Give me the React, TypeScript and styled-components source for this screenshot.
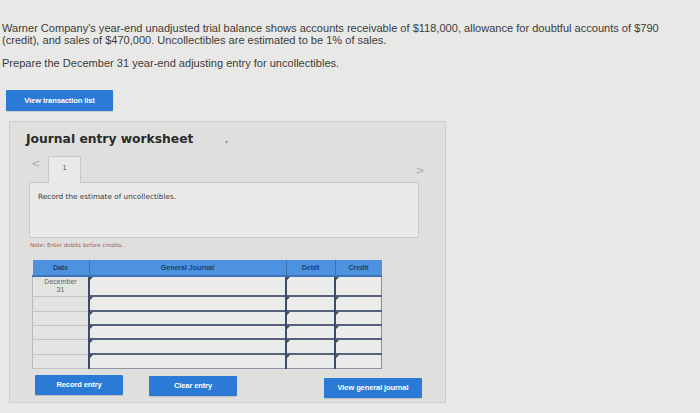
import React from "react";
import styled, { createGlobalStyle } from "styled-components";

const Global = createGlobalStyle`
  html, body { margin: 0; padding: 0; background: #e8e8e6; }
  body { width: 700px; height: 413px; overflow: hidden; }
`;

const Page = styled.div`
  padding: 23px 0 0 2px;
  font-family: "Liberation Sans", Arial, sans-serif;
  color: #333;
`;

const Intro = styled.p`
  margin: 0;
  font-size: 11.05px;
  line-height: 11.5px;
  color: #3c3c3c;
  width: 664px;
`;

const Prompt = styled.p`
  margin: 11px 0 0;
  font-size: 11.05px;
  line-height: 12px;
  color: #3c3c3c;
`;

const BlueButton = styled.button<{ $w: number }>`
  width: ${(p) => p.$w}px;
  height: 20px;
  border: none;
  border-radius: 1px;
  background: #2b7bd6;
  color: #fff;
  font-family: "Liberation Sans", Arial, sans-serif;
  font-weight: bold;
  font-size: 7.5px;
  letter-spacing: -0.1px;
  padding: 0;
  box-shadow: 0 1px 1px rgba(0,0,0,0.15);
`;

const TopButtonRow = styled.div`
  margin: 20px 0 0 4px;
`;

const Panel = styled.div`
  margin: 10px 0 0 7px;
  width: 437px;
  height: 282px;
  box-sizing: border-box;
  background: #dfdfdd;
  border: 1px solid #cdcdcb;
  padding: 10px 0 0 16px;
`;

const TitleRow = styled.div`
  display: flex;
  align-items: center;
  gap: 32px;
`;

const Title = styled.h2`
  margin: 0;
  font-family: "DejaVu Sans", Verdana, sans-serif;
  font-weight: bold;
  font-size: 12.3px;
  color: #2a2a2a;
`;

const Caret = styled.span`
  font-size: 6px;
  color: #999;
  margin-top: 4px;
`;

const TabRow = styled.div`
  display: flex;
  align-items: flex-end;
  height: 27px;
  margin-top: 9px;
  width: 394px;
`;

const Arrow = styled.span`
  color: #a8a8a8;
  font-family: "DejaVu Sans", sans-serif;
  font-size: 11px;
  align-self: center;
`;

const LeftArrow = styled(Arrow)`
  width: 22px;
  padding-left: 5px;
  box-sizing: border-box;
  margin-top: -10px;
`;

const RightArrow = styled(Arrow)`
  margin-left: auto;
  margin-top: 3px;
  margin-right: -5px;
`;

const Tab = styled.div`
  width: 33px;
  height: 27px;
  box-sizing: border-box;
  border: 1px solid #c8c8c6;
  border-bottom: none;
  background: #e9e9e7;
  font-family: "DejaVu Sans", sans-serif;
  font-size: 6.5px;
  color: #4a4a4a;
  display: flex;
  justify-content: center;
  padding-top: 7px;
  margin-bottom: -1px;
  position: relative;
  z-index: 1;
`;

const ContentBox = styled.div`
  margin-left: 3px;
  width: 390px;
  height: 56px;
  box-sizing: border-box;
  background: #e9e9e7;
  border: 1px solid #c8c8c6;
  padding: 9px 0 0 8px;
  font-family: "DejaVu Sans", Verdana, sans-serif;
  font-size: 7.3px;
  color: #3d3d3d;
`;

const Note = styled.div`
  margin: 4px 0 0 4px;
  font-family: "DejaVu Sans", Verdana, sans-serif;
  font-size: 5.6px;
  color: #9b5c55;
`;

const Table = styled.table`
  margin: 12px 0 0 6px;
  border-collapse: collapse;
  table-layout: fixed;
  width: 346px;
  font-family: "Liberation Sans", Arial, sans-serif;
`;

const Th = styled.th<{ $w: number }>`
  width: ${(p) => p.$w}px;
  height: 15px;
  padding: 0;
  background: #4c92df;
  color: #1e3f72;
  font-size: 7px;
  font-weight: bold;
  border-left: 1px solid #3a6fb0;
  border-bottom: 2px solid #3f73b8;
  &:first-child { border-left: none; }
`;

const Row = styled.tr<{ $h: number }>`
  height: ${(p) => p.$h}px;
`;

const DateCell = styled.td`
  padding: 0;
  background: #e3e3e1;
  border: 1px solid #c4c4c2;
  border-left: 1px solid #b9b9b7;
  font-size: 7px;
  line-height: 8px;
  color: #666;
  text-align: center;
  vertical-align: top;
  padding-top: 1px;
`;

const InputCell = styled.td<{ $last?: boolean }>`
  padding: 0;
  background: #ebebe9;
  border-top: 2px solid #56627c;
  border-left: 2px solid #3d4b6a;
  border-right: ${(p) => (p.$last ? "1px solid #8d8d8d" : "none")};
  border-bottom: 1px solid #8d95a5;
  position: relative;
  &::before {
    content: "";
    position: absolute;
    left: 0;
    top: 0;
    border-left: 3px solid #3d4b6a;
    border-bottom: 3px solid transparent;
  }
`;

const BottomButtons = styled.div`
  display: flex;
  align-items: flex-start;
  margin: 6px 0 0 9px;
`;

const rows = [20, 15, 14, 14, 15, 14];

export default function App() {
  return (
    <>
      <Global />
      <Page>
        <Intro>
          Warner Company's year-end unadjusted trial balance shows accounts receivable of $118,000, allowance for doubtful accounts of $790 (credit), and sales of $470,000. Uncollectibles are estimated to be 1% of sales.
        </Intro>
        <Prompt>Prepare the December 31 year-end adjusting entry for uncollectibles.</Prompt>
        <TopButtonRow>
          <BlueButton $w={107} style={{ height: 21 }}>View transaction list</BlueButton>
        </TopButtonRow>
        <Panel>
          <TitleRow>
            <Title>Journal entry worksheet</Title>
            <Caret>▾</Caret>
          </TitleRow>
          <TabRow>
            <LeftArrow>&lt;</LeftArrow>
            <Tab>1</Tab>
            <RightArrow>&gt;</RightArrow>
          </TabRow>
          <ContentBox>Record the estimate of uncollectibles.</ContentBox>
          <Note>Note: Enter debits before credits.</Note>
          <Table>
            <thead>
              <tr>
                <Th $w={56}>Date</Th>
                <Th $w={196}>General Journal</Th>
                <Th $w={48}>Debit</Th>
                <Th $w={46}>Credit</Th>
              </tr>
            </thead>
            <tbody>
              {rows.map((h, i) => (
                <Row key={i} $h={h}>
                  <DateCell>{i === 0 ? <>December<br />31</> : null}</DateCell>
                  <InputCell />
                  <InputCell />
                  <InputCell $last />
                </Row>
              ))}
            </tbody>
          </Table>
          <BottomButtons>
            <BlueButton $w={88}>Record entry</BlueButton>
            <BlueButton $w={88} style={{ marginLeft: 26, marginTop: 1 }}>Clear entry</BlueButton>
            <BlueButton $w={98} style={{ marginLeft: 87, marginTop: 3 }}>View general journal</BlueButton>
          </BottomButtons>
        </Panel>
      </Page>
    </>
  );
}
